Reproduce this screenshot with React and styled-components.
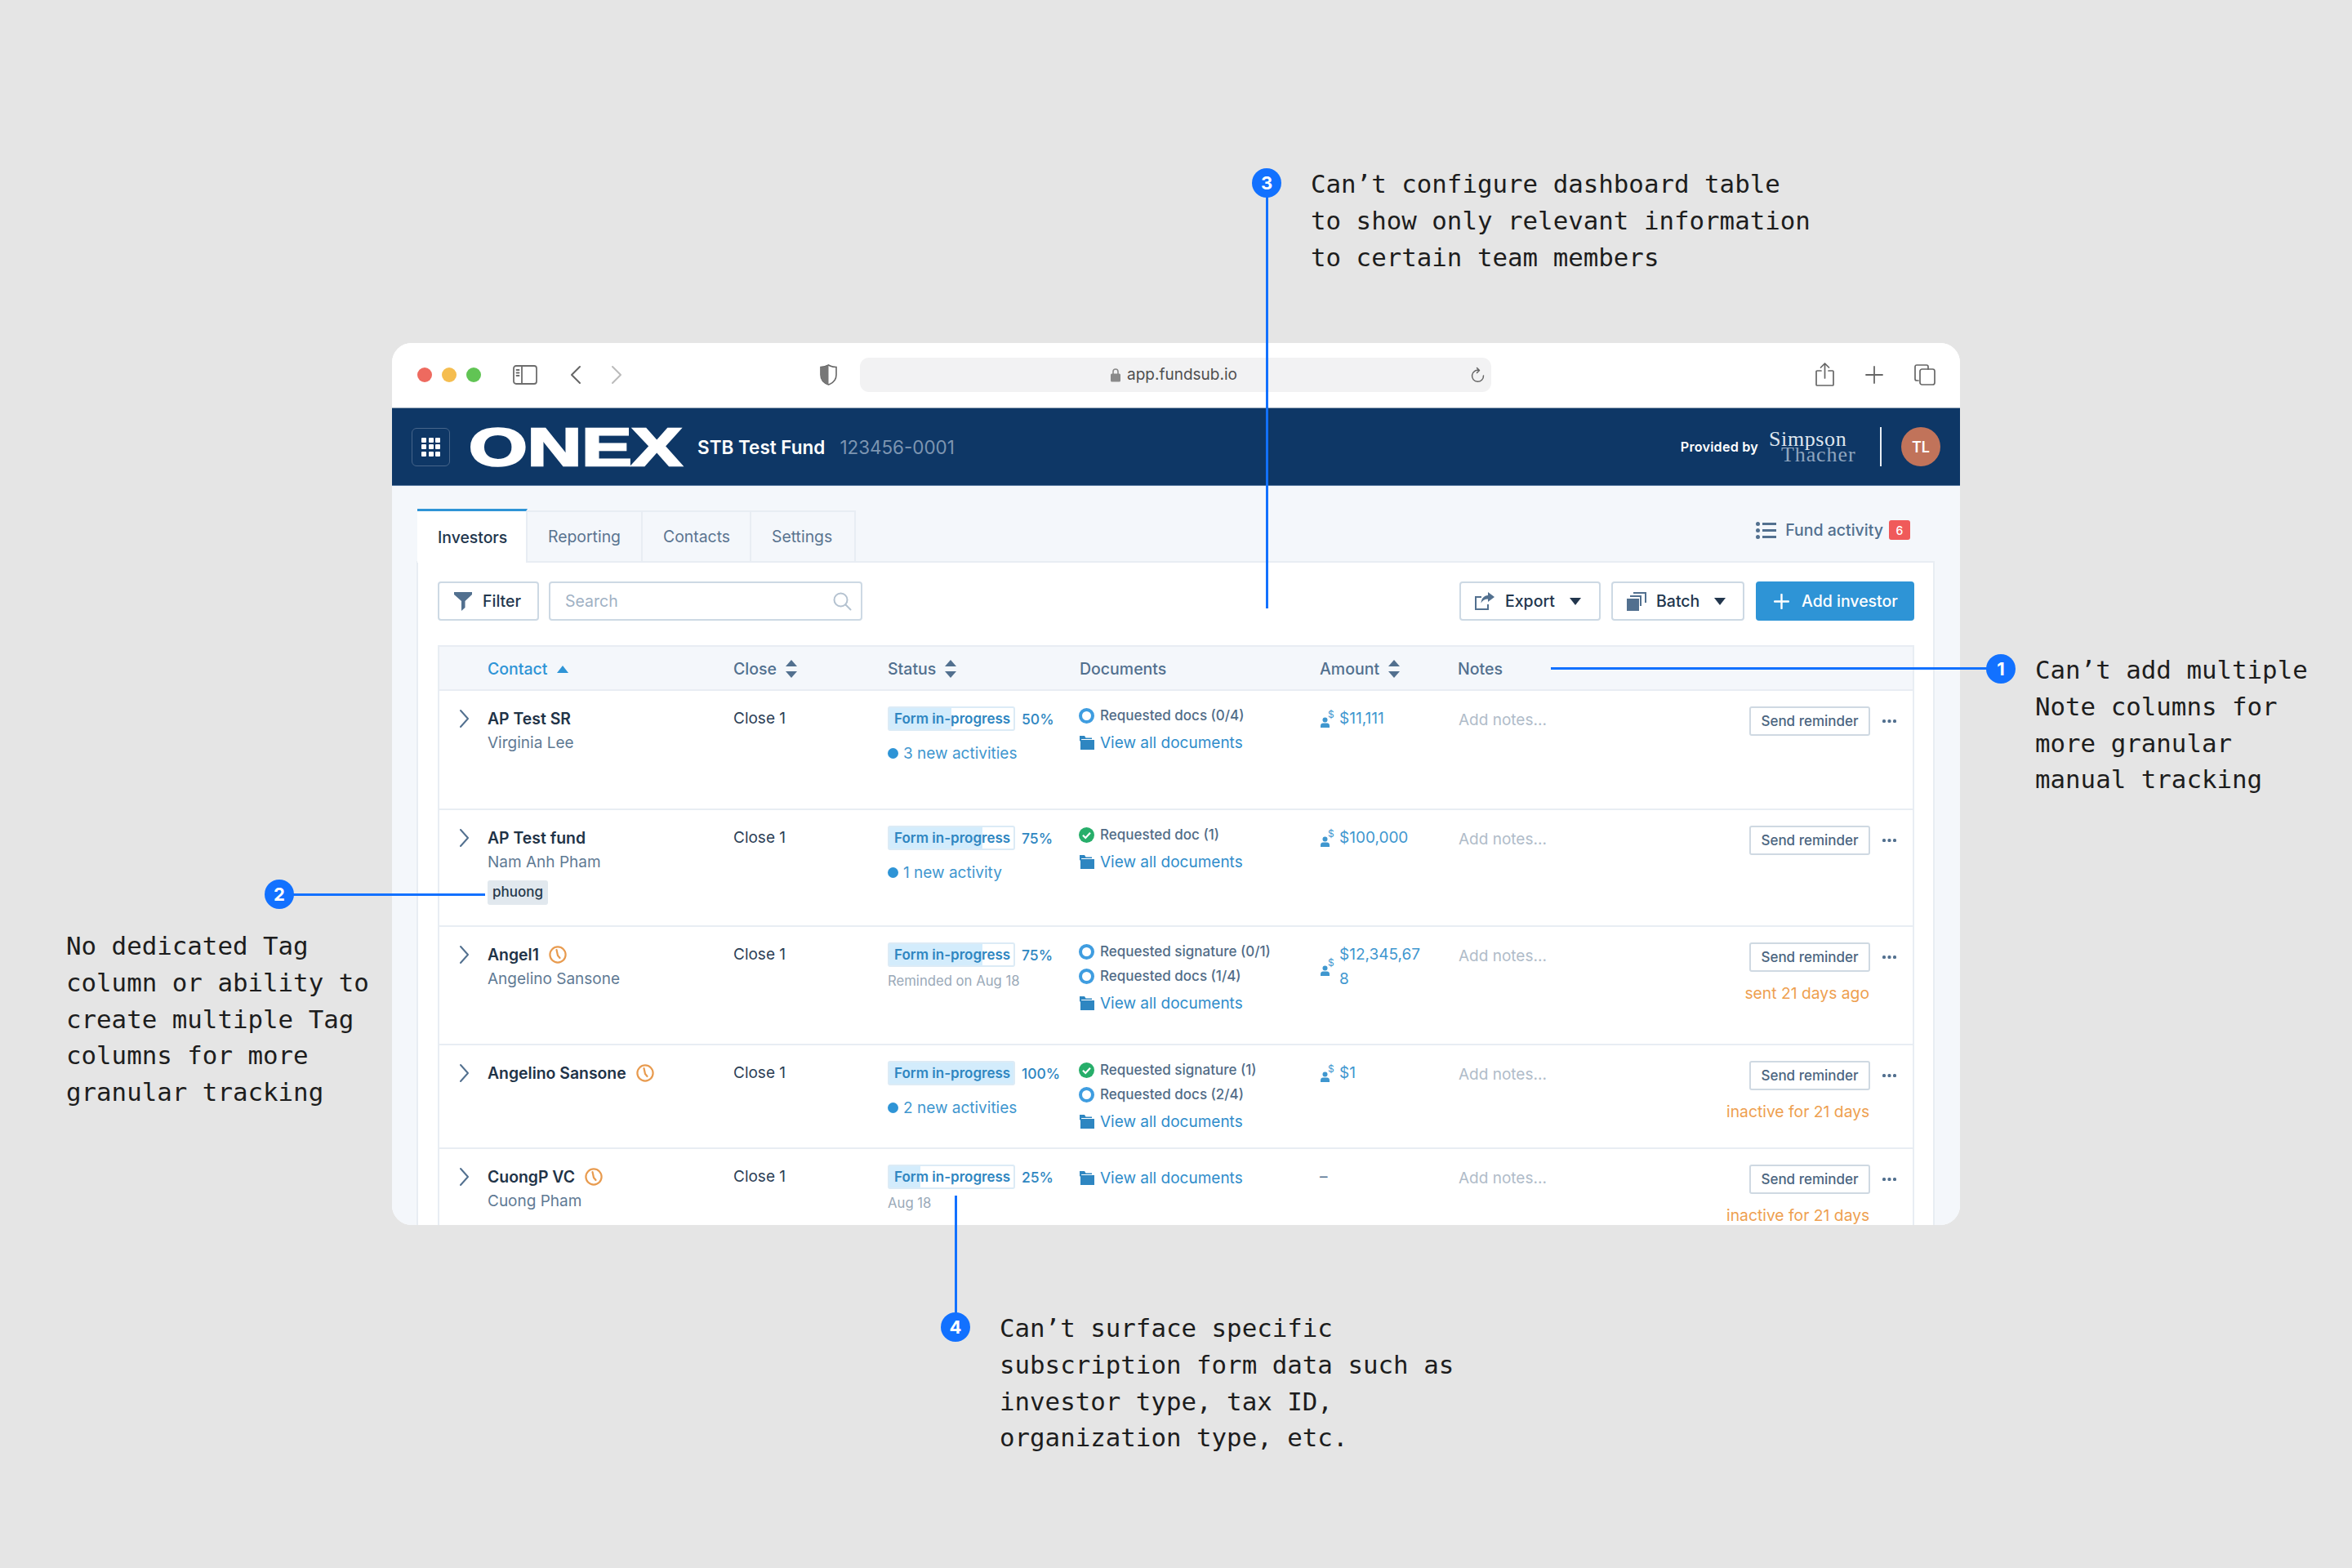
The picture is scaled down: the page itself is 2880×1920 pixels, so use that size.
import React from "react";
import styled, { createGlobalStyle } from "styled-components";

const Global = createGlobalStyle`
  html, body { margin: 0; padding: 0; background: #e5e5e5; }
  * { box-sizing: border-box; }
  body { font-family: Inter, "Liberation Sans", sans-serif; }
`;

const Page = styled.div`
  position: relative;
  width: 2880px;
  height: 1920px;
  padding: 420px 480px 420px;
  background: #e5e5e5;
  overflow: hidden;
`;

const Browser = styled.div`
  width: 1920px;
  height: 1080px;
  border-radius: 24px;
  background: #fff;
  overflow: hidden;
  display: flex;
  flex-direction: column;
`;

const Chrome = styled.div`
  height: 80px;
  flex: none;
  display: flex;
  align-items: center;
  padding: 0 30px 2px 31px;
  border-bottom: 1px solid #93a3b5;
  background: #fff;
`;
const ChromeLeft = styled.div`
  width: 493px;
  display: flex;
  align-items: center;
`;
const Lights = styled.div`
  display: flex;
  gap: 12px;
  margin-right: 39px;
`;
const Light = styled.span`
  width: 18px;
  height: 18px;
  border-radius: 50%;
  background: ${(p) => p.$c};
`;
const NavGroup = styled.div`
  display: flex;
  align-items: center;
  gap: 36px;
  margin-left: 40px;
`;
const UrlBar = styled.div`
  width: 773px;
  height: 42px;
  margin-left: 28px;
  border-radius: 11px;
  background: #f2f2f3;
  display: grid;
  grid-template-columns: 1fr auto 1fr;
  align-items: center;
  padding-right: 8px;
`;
const UrlCenter = styled.div`
  grid-column: 2;
  display: flex;
  align-items: center;
  gap: 8px;
  font-size: 19px;
  color: #4f4f4f;
  transform: translateX(2px);
`;
const UrlEnd = styled.div`
  grid-column: 3;
  justify-self: end;
  display: flex;
`;
const ChromeRight = styled.div`
  margin-left: auto;
  display: flex;
  align-items: center;
  gap: 38px;
`;

const TopBar = styled.header`
  height: 95px;
  flex: none;
  display: flex;
  align-items: center;
  padding: 0 24px;
  background: #0e3766;
  border-bottom: 1px solid #5d7da3;
`;
const GridButton = styled.div`
  width: 47px;
  height: 47px;
  border: 1.5px solid #47658a;
  border-radius: 6px;
  display: grid;
  grid-template-columns: repeat(3, 6px);
  grid-auto-rows: 6px;
  gap: 2.5px;
  place-content: center;
`;
const Dot = styled.span`
  background: #fff;
  border-radius: 1px;
`;
const LogoSvg = styled.svg`
  margin-left: 25px;
  flex: none;
  overflow: visible;
`;
const FundName = styled.div`
  margin-left: 19px;
  font-size: 22.5px;
  font-weight: 600;
  color: #fff;
`;
const FundCode = styled.div`
  margin-left: 18px;
  font-size: 22.4px;
  color: #7d95b1;
`;
const TopRight = styled.div`
  margin-left: auto;
  display: flex;
  align-items: center;
`;
const Provided = styled.div`
  font-size: 16.2px;
  font-weight: 600;
  color: #fff;
  letter-spacing: 0.2px;
`;
const Firm = styled.div`
  margin-left: 13px;
  width: 106px;
  font-family: "Liberation Serif", serif;
  font-size: 26px;
  line-height: 19px;
`;
const FirmTop = styled.div`
  color: #dfe6ee;
  letter-spacing: 0.6px;
`;
const FirmBottom = styled.div`
  color: #8fa5be;
  letter-spacing: 0.9px;
  padding-left: 15px;
`;
const VRule = styled.span`
  width: 2px;
  height: 48px;
  margin: 0 24px 0 30px;
  background: #e8edf3;
`;
const Avatar = styled.div`
  width: 48px;
  height: 48px;
  border-radius: 50%;
  background: #c1735a;
  color: #fff;
  font-size: 18px;
  font-weight: 600;
  display: flex;
  align-items: center;
  justify-content: center;
`;

const Content = styled.main`
  flex: 1;
  min-height: 0;
  background: #f4f7fb;
  padding: 28px 31px 0 30px;
  display: flex;
  flex-direction: column;
`;
const TabRow = styled.div`
  height: 64px;
  flex: none;
  display: flex;
  align-items: flex-end;
  padding-left: 1px;
`;
const Tab = styled.div`
  width: ${(p) => p.$w}px;
  height: ${(p) => (p.$active ? 66 : 62)}px;
  margin-bottom: ${(p) => (p.$active ? -2 : 0)}px;
  padding-left: 25px;
  display: flex;
  align-items: center;
  font-size: 19.4px;
  font-weight: ${(p) => (p.$active ? 500 : 400)};
  color: ${(p) => (p.$active ? "#22364d" : "#5a7490")};
  background: ${(p) => (p.$active ? "#fff" : "#f4f7fb")};
  border-top: ${(p) => (p.$active ? "3px solid #2e94d6" : "2px solid #e8edf3")};
  border-right: 2px solid #e8edf3;
  position: relative;
  z-index: 1;
`;
const FundActivity = styled.div`
  margin-left: auto;
  margin-right: 30px;
  align-self: flex-start;
  margin-top: 14px;
  display: flex;
  align-items: center;
  font-size: 19.5px;
  font-weight: 500;
  color: #52708f;
`;
const Badge = styled.span`
  width: 26px;
  height: 24px;
  margin-left: 7px;
  border-radius: 3px;
  background: #f05a5a;
  color: #fff;
  font-size: 14px;
  display: flex;
  align-items: center;
  justify-content: center;
`;
const FundText = styled.span`
  margin-left: 11px;
`;

const Panel = styled.section`
  flex: 1;
  min-height: 0;
  border: 2px solid #e8edf3;
  border-bottom: 0;
  background: #fff;
  padding: 23px 23px 0 24px;
`;
const ToolRow = styled.div`
  display: flex;
  align-items: center;
  height: 48px;
  margin-bottom: 30px;
`;
const Button = styled.div`
  width: ${(p) => p.$w}px;
  height: 48px;
  padding-left: ${(p) => p.$pl}px;
  margin-left: ${(p) => p.$ml || 0}px;
  border: 2px solid #cdd9e4;
  border-radius: 4px;
  background: #fff;
  display: flex;
  align-items: center;
  font-size: 19.5px;
  font-weight: 500;
  color: #22364d;
`;
const PrimaryButton = styled(Button)`
  background: #2e94d6;
  border-color: #2e94d6;
  color: #fff;
`;
const ButtonLabel = styled.span`
  margin-left: ${(p) => p.$ml}px;
  margin-right: ${(p) => p.$mr || 0}px;
`;
const SearchBox = styled.div`
  width: 384px;
  height: 48px;
  margin-left: 12px;
  padding: 0 11px 0 18px;
  border: 2px solid #cdd9e4;
  border-radius: 4px;
  display: flex;
  align-items: center;
  justify-content: space-between;
  font-size: 19.5px;
  color: #9fb1c4;
`;
const ToolSpacer = styled.div`
  flex: 1;
`;

const COLUMNS = "59px 301px 189px 235px 294px 169px 329px 228px";

const Table = styled.div`
  border-left: 2px solid #e8edf3;
  border-right: 2px solid #e8edf3;
`;
const HeadRow = styled.div`
  display: grid;
  grid-template-columns: ${COLUMNS};
  height: 56px;
  padding-top: 2px;
  align-items: center;
  background: #f4f7fb;
  border-top: 2px solid #e8edf3;
  border-bottom: 2px solid #e8edf3;
`;
const HeadCell = styled.div`
  grid-column: ${(p) => p.$col};
  display: flex;
  align-items: center;
  gap: 11px;
  font-size: 19.5px;
  font-weight: 500;
  color: ${(p) => (p.$active ? "#2e94d6" : "#52708f")};
`;
const Row = styled.div`
  display: grid;
  grid-template-columns: ${COLUMNS};
  height: ${(p) => p.$h}px;
  padding-top: 19px;
  align-items: start;
  border-bottom: 2px solid #e8edf3;
`;
const ChevronCell = styled.div`
  height: 30px;
  padding-left: 24px;
  display: flex;
  align-items: center;
`;
const NameLine = styled.div`
  height: 30px;
  display: flex;
  align-items: center;
  gap: 12px;
  font-size: 19.4px;
  font-weight: 600;
  color: #1f3347;
`;
const SubLine = styled.div`
  height: 30px;
  line-height: 30px;
  font-size: 19px;
  color: #5f7a94;
`;
const Tag = styled.span`
  display: inline-block;
  margin-top: 7px;
  height: 30px;
  line-height: 29px;
  padding: 0 6px;
  border-radius: 3px;
  background: #e1e8ee;
  font-size: 17px;
  font-weight: 500;
  color: #26384b;
`;
const PlainCell = styled.div`
  height: 30px;
  line-height: 30px;
  font-size: 19px;
  color: #2c4056;
`;
const ProgressLine = styled.div`
  display: flex;
  align-items: center;
  gap: 8px;
`;
const Progress = styled.div`
  width: 156px;
  height: 30px;
  padding-left: 6px;
  border: 2px solid #dcebf6;
  border-radius: 3px;
  display: flex;
  align-items: center;
  font-size: 17px;
  font-weight: 600;
  color: #2e86c1;
  white-space: nowrap;
`;
const Percent = styled.span`
  font-size: 17.5px;
  font-weight: 500;
  color: #2e86c1;
`;
const Activity = styled.div`
  margin-top: 12px;
  height: 30px;
  display: flex;
  align-items: center;
  gap: 6px;
  font-size: 19px;
  color: #3f97cf;
`;
const ActivityDot = styled.span`
  width: 13px;
  height: 13px;
  border-radius: 50%;
  background: #2e94d6;
`;
const Hint = styled.div`
  margin-top: 5px;
  height: 24px;
  line-height: 24px;
  font-size: 16.7px;
  color: #9aa9b8;
`;
const DocCell = styled.div`
  margin: -4px 0 0 -1px;
`;
const DocLine = styled.div`
  height: 30px;
  display: flex;
  align-items: center;
  gap: 7px;
  font-size: 17px;
  font-weight: 500;
  color: #516c87;
`;
const ViewAll = styled.div`
  margin-top: 3px;
  height: 30px;
  display: flex;
  align-items: center;
  gap: 7px;
  font-size: 19px;
  color: #2f8dcb;
  &:first-child {
    margin-top: 5px;
  }
`;
const Ring = styled.span`
  width: 19px;
  height: 19px;
  border-radius: 50%;
  border: 4px solid #3f9de0;
  background: #fff;
  flex: none;
`;
const AmountCell = styled.div`
  display: flex;
  align-items: center;
  gap: 6px;
  font-size: 19px;
  line-height: 30px;
  color: #3f97cf;
`;
const AmountValue = styled.span`
  width: 105px;
  word-break: break-all;
`;
const Dash = styled.span`
  font-size: 19px;
  line-height: 30px;
  color: #52708f;
`;
const NotesCell = styled.div`
  margin-top: 2px;
  height: 30px;
  line-height: 30px;
  padding-left: 1px;
  font-size: 19px;
  color: #b0bcc9;
`;
const ActionTop = styled.div`
  display: flex;
  align-items: center;
  justify-content: flex-end;
  gap: 15px;
  padding-right: 20px;
`;
const Reminder = styled.div`
  width: 148px;
  height: 36px;
  border: 2px solid #cfd9e2;
  border-radius: 3px;
  display: flex;
  align-items: center;
  justify-content: center;
  font-size: 17px;
  font-weight: 500;
  color: #4b6580;
`;
const Warn = styled.div`
  margin-top: 11px;
  height: 30px;
  line-height: 30px;
  padding-right: 53px;
  text-align: right;
  font-size: 19.3px;
  color: #ee9f50;
  white-space: nowrap;
`;

/* annotations sit over the page on a free canvas */
const Marker = styled.div`
  position: absolute;
  left: ${(p) => p.$x - 18}px;
  top: ${(p) => p.$y - 18}px;
  width: 36px;
  height: 36px;
  border-radius: 50%;
  background: #1271ff;
  color: #fff;
  font-size: 22px;
  font-weight: 700;
  display: flex;
  align-items: center;
  justify-content: center;
  z-index: 3;
`;
const HLine = styled.div`
  position: absolute;
  left: ${(p) => p.$x}px;
  top: ${(p) => p.$y - 1.5}px;
  width: ${(p) => p.$w}px;
  height: 3px;
  background: #1271ff;
  z-index: 2;
`;
const VLine = styled.div`
  position: absolute;
  left: ${(p) => p.$x - 1.5}px;
  top: ${(p) => p.$y}px;
  width: 3px;
  height: ${(p) => p.$h}px;
  background: #1271ff;
  z-index: 2;
`;
const Note = styled.div`
  position: absolute;
  left: ${(p) => p.$x}px;
  top: ${(p) => p.$y}px;
  font-family: "DejaVu Sans Mono", "Liberation Mono", monospace;
  font-size: 30.8px;
  line-height: 44.8px;
  color: #1d1d1d;
  white-space: pre;
`;

const Stroke = ({ w, h, vb, c = "#666", sw = 2, children }) => (
  <svg width={w} height={h} viewBox={vb} fill="none" stroke={c} strokeWidth={sw} strokeLinecap="round" strokeLinejoin="round">
    {children}
  </svg>
);

const Chevron = () => (
  <Stroke w={13} h={24} vb="0 0 13 24" c="#52708f" sw={2}>
    <path d="M2 2l9 10-9 10" />
  </Stroke>
);
const Sort = () => (
  <svg width="14" height="22" viewBox="0 0 14 22" fill="#52708f">
    <path d="M7 0l7 8H0zM0 14h14l-7 8z" />
  </svg>
);
const SortUp = () => (
  <svg width="14" height="9" viewBox="0 0 14 9" fill="#2e94d6">
    <path d="M7 0l7 9H0z" />
  </svg>
);
const Caret = () => (
  <svg width="14" height="9" viewBox="0 0 14 9" fill="#22364d">
    <path d="M0 0h14L7 9z" />
  </svg>
);
const Clock = () => (
  <Stroke w={22} h={22} vb="0 0 22 22" c="#e89b4f" sw={2.2}>
    <circle cx="11" cy="11" r="9.6" />
    <path d="M9.5 5l1.5 7 2.5 3" />
  </Stroke>
);
const Check = () => (
  <svg width="19" height="19" viewBox="0 0 19 19">
    <circle cx="9.5" cy="9.5" r="9.5" fill="#27ae6a" />
    <path d="M5 9.8l3.2 3.2L14 6.8" fill="none" stroke="#fff" strokeWidth="2.2" />
  </svg>
);
const Folder = () => (
  <svg width="19" height="18" viewBox="0 0 19 18" fill="#2e86c1">
    <path d="M1 1h6l1.5 2.5H16V5H3.5L1 8z" />
    <path d="M2 6h17v12H2z" />
  </svg>
);
const Investor = () => (
  <svg width="18" height="24" viewBox="0 0 18 24" fill="#3f97cf">
    <circle cx="6.5" cy="13.5" r="3" />
    <path d="M1 23v-2.5c0-2 1.5-3 3-3h5c1.500 0 3 1 3 3V23z" />
    <text x="10" y="11" fontFamily="Inter, sans-serif" fontSize="12" fill="#3f97cf">$</text>
  </svg>
);
const MoreDots = () => (
  <svg width="17" height="5" viewBox="0 0 17 5" fill="#52708f">
    <rect x="0" y="0" width="4" height="4" rx="1.500" />
    <rect x="6.500" y="0" width="4" height="4" rx="1.500" />
    <rect x="13" y="0" width="4" height="4" rx="1.500" />
  </svg>
);

const Status = ({ pct }) => (
  <ProgressLine>
    <Progress style={{ background: `linear-gradient(90deg, #d3ecfc ${pct}%, #fff ${pct}%)` }}>Form in-progress</Progress>
    <Percent>{pct}%</Percent>
  </ProgressLine>
);

const Actions = ({ warn }) => (
  <div>
    <ActionTop>
      <Reminder>Send reminder</Reminder>
      <MoreDots />
    </ActionTop>
    {warn && <Warn>{warn}</Warn>}
  </div>
);

const rows = [
  {
    h: 146, name: "AP Test SR", sub: "Virginia Lee", pct: 50, activity: "3 new activities",
    docs: [{ t: "Requested docs (0/4)" }], amount: "$11,111",
  },
  {
    h: 143, name: "AP Test fund", sub: "Nam Anh Pham", tag: "phuong", pct: 75, activity: "1 new activity",
    docs: [{ t: "Requested doc (1)", ok: true }], amount: "$100,000",
  },
  {
    h: 145, name: "Angel1", clock: true, sub: "Angelino Sansone", pct: 75, hint: "Reminded on Aug 18",
    docs: [{ t: "Requested signature (0/1)" }, { t: "Requested docs (1/4)" }], amount: "$12,345,678", warn: "sent 21 days ago",
  },
  {
    h: 127, name: "Angelino Sansone", clock: true, pct: 100, activity: "2 new activities",
    docs: [{ t: "Requested signature (1)", ok: true }, { t: "Requested docs (2/4)" }], amount: "$1", warn: "inactive for 21 days",
  },
  {
    h: 130, name: "CuongP VC", clock: true, sub: "Cuong Pham", pct: 25, hint: "Aug 18",
    docs: [], warn: "inactive for 21 days",
  },
];

export default function App() {
  return (
    <Page>
      <Global />
      <Browser>
        <Chrome>
          <ChromeLeft>
            <Lights>
              <Light $c="#ee6a5f" />
              <Light $c="#f5bd4f" />
              <Light $c="#61c454" />
            </Lights>
            <Stroke w={30} h={24} vb="0 0 30 24" c="#6d6d6d" sw={1.8}>
              <rect x="1" y="1" width="28" height="22" rx="3" />
              <path d="M11 1v22M4.500 6h3M4.500 9.500h3M4.500 13h3" />
            </Stroke>
            <NavGroup>
              <Stroke w={14} h={24} vb="0 0 14 24" c="#666" sw={2}>
                <path d="M12 2L2 12l10 10" />
              </Stroke>
              <Stroke w={14} h={24} vb="0 0 14 24" c="#bbb" sw={2}>
                <path d="M2 2l10 10L2 22" />
              </Stroke>
            </NavGroup>
          </ChromeLeft>
          <svg width="21" height="26" viewBox="0 0 21 26">
            <path d="M10.500 1C7 3 4 3.500 1 3.500V13c0 6 4 10 9.500 12C16 23 20 19 20 13V3.500C17 3.500 14 3 10.500 1z" fill="#fff" stroke="#666" strokeWidth="1.600" />
            <path d="M10.500 1C7 3 4 3.500 1 3.500V13c0 6 4 10 9.500 12z" fill="#777" />
          </svg>
          <UrlBar>
            <UrlCenter>
              <svg width="12" height="18" viewBox="0 0 12 18" fill="#8a8a8a">
                <path d="M3 8V5a3 3 0 016 0v3" fill="none" stroke="#8a8a8a" strokeWidth="1.600" />
                <rect x="0" y="7.500" width="12" height="10" rx="1.500" />
              </svg>
              app.fundsub.io
            </UrlCenter>
            <UrlEnd>
              <Stroke w={17} h={20} vb="0 0 17 20" c="#666" sw={1.500}>
                <path d="M10 4.500A7 7 0 1015.500 11M7.500 1.500l3 3-3 3" />
              </Stroke>
            </UrlEnd>
          </UrlBar>
          <ChromeRight>
            <Stroke w={23} h={29} vb="0 0 23 29" c="#666" sw={1.700}>
              <path d="M7 10H2a1 1 0 00-1 1v16a1 1 0 001 1h19a1 1 0 001-1V11a1 1 0 00-1-1h-5M11.500 19V1M6.500 6l5-5 5 5" />
            </Stroke>
            <Stroke w={22} h={22} vb="0 0 22 22" c="#666" sw={1.800}>
              <path d="M11 1v20M1 11h20" />
            </Stroke>
            <Stroke w={26} h={26} vb="0 0 26 26" c="#666" sw={1.700}>
              <path d="M5 20H3a2 2 0 01-2-2V3a2 2 0 012-2h12a2 2 0 012 2v3" />
              <rect x="7" y="6" width="18" height="19" rx="2.500" />
            </Stroke>
          </ChromeRight>
        </Chrome>

        <TopBar>
          <GridButton>
            {Array.from({ length: 9 }, (_, i) => (
              <Dot key={i} />
            ))}
          </GridButton>
          <LogoSvg width="259" height="48" viewBox="0 0 259 48">
            <text
              x="-2"
              y="47"
              textLength="261"
              lengthAdjust="spacingAndGlyphs"
              fontFamily="Liberation Sans, sans-serif"
              fontWeight="700"
              fontSize="65"
              fill="#fff"
              stroke="#fff"
              strokeWidth="2.500"
            >
              ONEX
            </text>
          </LogoSvg>
          <FundName>STB Test Fund</FundName>
          <FundCode>123456-0001</FundCode>
          <TopRight>
            <Provided>Provided by</Provided>
            <Firm>
              <FirmTop>Simpson</FirmTop>
              <FirmBottom>Thacher</FirmBottom>
            </Firm>
            <VRule />
            <Avatar>TL</Avatar>
          </TopRight>
        </TopBar>

        <Content>
          <TabRow>
            <Tab $w={135} $active>Investors</Tab>
            <Tab $w={141}>Reporting</Tab>
            <Tab $w={133}>Contacts</Tab>
            <Tab $w={128}>Settings</Tab>
            <FundActivity>
              <svg width="25" height="21" viewBox="0 0 25 21" fill="#52708f">
                <circle cx="2.500" cy="2.500" r="2.500" />
                <circle cx="2.500" cy="10.500" r="2.500" />
                <circle cx="2.500" cy="18.500" r="2.500" />
                <rect x="8" y="1" width="17" height="3" />
                <rect x="8" y="9" width="17" height="3" />
                <rect x="8" y="17" width="17" height="3" />
              </svg>
              <FundText>Fund activity</FundText>
              <Badge>6</Badge>
            </FundActivity>
          </TabRow>
          <Panel>
            <ToolRow>
              <Button $w={124} $pl={18}>
                <svg width="22" height="23" viewBox="0 0 22 23" fill="#52708f">
                  <path d="M0 0h22v3l-8.500 8v8L9 23V11L0 3z" />
                </svg>
                <ButtonLabel $ml={13}>Filter</ButtonLabel>
              </Button>
              <SearchBox>
                Search
                <Stroke w={23} h={23} vb="0 0 23 23" c="#b4c2d0" sw={2}>
                  <circle cx="9.500" cy="9.500" r="8" />
                  <path d="M15.500 15.500L21.500 21.500" />
                </Stroke>
              </SearchBox>
              <ToolSpacer />
              <Button $w={173} $pl={16}>
                <svg width="25" height="23" viewBox="0 0 25 23" fill="#52708f">
                  <path d="M2 5h7v2H3v13h13v-5h2v7H1V5z" />
                  <path d="M17 0l8 6-8 6V8.500c-4 0-6.500 1.500-8.500 5 .5-6 3.500-9 8.500-9.500z" />
                </svg>
                <ButtonLabel $ml={13} $mr={18}>Export</ButtonLabel>
                <Caret />
              </Button>
              <Button $w={163} $pl={17} $ml={13}>
                <svg width="24" height="23" viewBox="0 0 24 23" fill="#52708f">
                  <rect x="0" y="8" width="15" height="15" />
                  <path d="M4 6V4h14v13h-2V6zM8 2V0h16v13h-2V2z" />
                </svg>
                <ButtonLabel $ml={12} $mr={18}>Batch</ButtonLabel>
                <Caret />
              </Button>
              <PrimaryButton $w={194} $pl={20} $ml={14}>
                <Stroke w={19} h={19} vb="0 0 19 19" c="#fff" sw={2.400}>
                  <path d="M9.500 1v17M1 9.500h17" />
                </Stroke>
                <ButtonLabel $ml={15}>Add investor</ButtonLabel>
              </PrimaryButton>
            </ToolRow>

            <Table>
              <HeadRow>
                <HeadCell $col={2} $active>Contact <SortUp /></HeadCell>
                <HeadCell $col={3}>Close <Sort /></HeadCell>
                <HeadCell $col={4}>Status <Sort /></HeadCell>
                <HeadCell $col={5}>Documents</HeadCell>
                <HeadCell $col={6}>Amount <Sort /></HeadCell>
                <HeadCell $col={7}>Notes</HeadCell>
              </HeadRow>
              {rows.map((r) => (
                <Row key={r.name} $h={r.h}>
                  <ChevronCell><Chevron /></ChevronCell>
                  <div>
                    <NameLine>{r.name}{r.clock && <Clock />}</NameLine>
                    {r.sub && <SubLine>{r.sub}</SubLine>}
                    {r.tag && <Tag>{r.tag}</Tag>}
                  </div>
                  <PlainCell>Close 1</PlainCell>
                  <div>
                    <Status pct={r.pct} />
                    {r.activity && (
                      <Activity>
                        <ActivityDot />
                        {r.activity}
                      </Activity>
                    )}
                    {r.hint && <Hint>{r.hint}</Hint>}
                  </div>
                  <DocCell>
                    {r.docs.map((d) => (
                      <DocLine key={d.t}>
                        {d.ok ? <Check /> : <Ring />}
                        {d.t}
                      </DocLine>
                    ))}
                    <ViewAll>
                      <Folder />
                      View all documents
                    </ViewAll>
                  </DocCell>
                  {r.amount ? (
                    <AmountCell>
                      <Investor />
                      <AmountValue>{r.amount}</AmountValue>
                    </AmountCell>
                  ) : (
                    <Dash>–</Dash>
                  )}
                  <NotesCell>Add notes...</NotesCell>
                  <Actions warn={r.warn} />
                </Row>
              ))}
            </Table>
          </Panel>
        </Content>
      </Browser>

      <VLine $x={1551} $y={224} $h={521} />
      <Marker $x={1551} $y={224}>3</Marker>
      <Note $x={1605} $y={203}>{"Can’t configure dashboard table\nto show only relevant information\nto certain team members"}</Note>

      <HLine $x={1899} $y={818} $w={551} />
      <Marker $x={2450} $y={819}>1</Marker>
      <Note $x={2492} $y={798}>{"Can’t add multiple\nNote columns for\nmore granular\nmanual tracking"}</Note>

      <HLine $x={342} $y={1095} $w={252} />
      <Marker $x={342} $y={1095}>2</Marker>
      <Note $x={81} $y={1136}>{"No dedicated Tag\ncolumn or ability to\ncreate multiple Tag\ncolumns for more\ngranular tracking"}</Note>

      <VLine $x={1170} $y={1464} $h={161} />
      <Marker $x={1170} $y={1625}>4</Marker>
      <Note $x={1224} $y={1604}>{"Can’t surface specific\nsubscription form data such as\ninvestor type, tax ID,\norganization type, etc."}</Note>
    </Page>
  );
}
